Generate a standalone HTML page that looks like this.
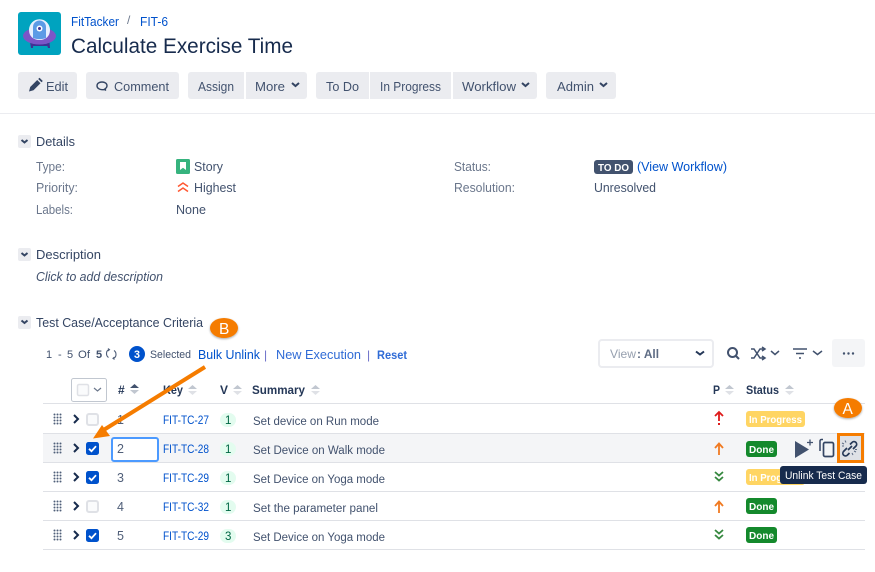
<!DOCTYPE html>
<html><head><meta charset="utf-8">
<style>
html,body{margin:0;padding:0;background:#fff;width:875px;height:572px;overflow:hidden}
svg{display:block}
text{font-family:"Liberation Sans",sans-serif;font-size:13px;fill:#42526e}
.b{fill:#ebecf0}
.l{fill:#6b778c}
.d{fill:#344563}
.a{fill:#0052cc}
.h{fill:#253858;font-weight:bold;font-size:12px}
.k{font-size:11.5px;fill:#0052cc}
.s{font-size:11.5px;fill:#42526e}
.n{fill:#505f79;font-size:12.5px}
.w{fill:#fff;font-weight:bold;font-size:10.5px}
.c{fill:none;stroke:#172b4d;stroke-width:2}
.o{fill:none;stroke:#42526e;stroke-width:1.5}
</style></head><body>
<svg width="875" height="572" viewBox="0 0 875 572" xmlns="http://www.w3.org/2000/svg">
<defs>
<filter id="sh" x="-30%" y="-30%" width="160%" height="160%"><feDropShadow dx="0" dy="1" stdDeviation="1" flood-color="#000" flood-opacity=".35"/></filter>
<g id="dots" fill="#505f79"><circle cx="0" cy="0" r="1"/><circle cx="3" cy="0" r="1"/><circle cx="6" cy="0" r="1"/><circle cx="0" cy="3" r="1"/><circle cx="3" cy="3" r="1"/><circle cx="6" cy="3" r="1"/><circle cx="0" cy="6" r="1"/><circle cx="3" cy="6" r="1"/><circle cx="6" cy="6" r="1"/><circle cx="0" cy="9" r="1"/><circle cx="3" cy="9" r="1"/><circle cx="6" cy="9" r="1"/></g>
<g id="chk"><rect x="0" y="0" width="13" height="13" rx="2.5" fill="#0052cc"/><path d="M3 6.8l2.5 2.4L10 4.2" fill="none" stroke="#fff" stroke-width="1.8"/></g>
<g id="unc"><rect x="1" y="1" width="11" height="11" rx="2" fill="#fafbfc" stroke="#dfe1e6" stroke-width="2"/></g>
<g id="sort"><path d="M4.5 0L9 4H0z" fill="#c1c7d0"/><path d="M0 6h9L4.5 10z" fill="#dfe1e6"/></g>
<g id="up"><path d="M0 5L4 .5 8 5M4 1v11" fill="none" stroke="#f07a22" stroke-width="1.8"/></g>
<g id="dn"><path d="M0 0l4 3.5L8 0M0 5l4 3.5L8 5" fill="none" stroke="#36883f" stroke-width="1.8"/></g>
</defs>

<!-- logo -->
<rect x="18" y="12" width="43" height="43" rx="3" fill="#00a3bf"/>
<path d="M30 42h3.500l-.5 6h-2zM46 42h3.500l.5 6h-2z" fill="#403294"/>
<rect x="31" y="44" width="18" height="2" fill="#403294"/>
<ellipse cx="39.500" cy="36" rx="16.500" ry="8.500" fill="#7c55c7"/>
<path d="M29 30a10.500 10.800 0 0 1 21 0c0 6-4 10-10.500 10S29 36 29 30z" fill="#e6efff"/>
<path d="M33 38V27a6.500 6.500 0 0 1 13 0v11c-4 1.500-9 1.500-13 0z" fill="#5c9be6"/>
<circle cx="39.500" cy="28.500" r="3" fill="#fff"/><circle cx="39.500" cy="28.500" r="1.500" fill="#403294"/>

<!-- header text -->
<text x="71" y="26" textLength="48" lengthAdjust="spacingAndGlyphs" class="a" style="font-size:12.5px">FitTacker</text>
<text x="127" y="24" class="l" style="font-size:12px">/</text>
<text x="140" y="26" textLength="28" lengthAdjust="spacingAndGlyphs" class="a" style="font-size:12.5px">FIT-6</text>
<text x="71" y="53" textLength="222" lengthAdjust="spacingAndGlyphs" style="font-size:21.5px;fill:#172b4d">Calculate Exercise Time</text>

<!-- toolbar -->
<rect x="18" y="72" width="59" height="27" rx="3" class="b"/>
<rect x="86" y="72" width="93" height="27" rx="3" class="b"/>
<path d="M188 75a3 3 0 0 1 3-3h53v27h-53a3 3 0 0 1-3-3z" class="b"/>
<path d="M246 72h58a3 3 0 0 1 3 3v21a3 3 0 0 1-3 3h-58z" class="b"/>
<path d="M316 75a3 3 0 0 1 3-3h50v27h-50a3 3 0 0 1-3-3z" class="b"/>
<rect x="370" y="72" width="81" height="27" class="b"/>
<path d="M453 72h81a3 3 0 0 1 3 3v21a3 3 0 0 1-3 3h-81z" class="b"/>
<rect x="546" y="72" width="70" height="27" rx="3" class="b"/>
<path d="M29 91.500l1.200-4.500 7-7 3.300 3.300-7 7zM38.200 79l1.300-1.300 3.300 3.300-1.300 1.300z" fill="#344563"/>
<text x="46" y="91" textLength="22" lengthAdjust="spacingAndGlyphs">Edit</text>
<path d="M106 90.500l-1.500-1.300c1.300-.8 2.500-1.900 2.500-3.500 0-2.400-2.400-3.700-5-3.700s-5 1.300-5 3.700 2.400 4 5 4h4" fill="none" stroke="#344563" stroke-width="1.400"/>
<text x="114" y="91" textLength="55" lengthAdjust="spacingAndGlyphs">Comment</text>
<text x="198" y="91" textLength="36" lengthAdjust="spacingAndGlyphs">Assign</text>
<text x="255" y="91" textLength="30" lengthAdjust="spacingAndGlyphs">More</text>
<path d="M292 83l3.500 3 3.500-3" class="c" style="stroke:#344563"/>
<text x="326" y="91" textLength="33" lengthAdjust="spacingAndGlyphs">To Do</text>
<text x="380" y="91" textLength="61" lengthAdjust="spacingAndGlyphs">In Progress</text>
<text x="462" y="91" textLength="54" lengthAdjust="spacingAndGlyphs">Workflow</text>
<path d="M522 83l3.500 3 3.500-3" class="c" style="stroke:#344563"/>
<text x="557" y="91" textLength="37" lengthAdjust="spacingAndGlyphs">Admin</text>
<path d="M600 83l3.500 3 3.500-3" class="c" style="stroke:#344563"/>
<rect x="0" y="113" width="875" height="1" fill="#ebecf0"/>

<!-- details -->
<rect x="18" y="135" width="13" height="13" rx="2" class="b"/>
<path d="M21.500 140l3 2.500 3-2.500" class="c" style="stroke:#344563"/>
<text x="36" y="146" textLength="39" lengthAdjust="spacingAndGlyphs" class="d" style="font-size:12.5px">Details</text>
<text x="36" y="171" textLength="29" lengthAdjust="spacingAndGlyphs" class="l" style="font-size:12.5px">Type:</text>
<rect x="176" y="159" width="14" height="15" rx="1.5" fill="#36b37e"/>
<path d="M180 162h6v8l-3-2.200-3 2.200z" fill="#fff"/>
<text x="194" y="171" textLength="29" lengthAdjust="spacingAndGlyphs" style="font-size:12.5px">Story</text>
<text x="36" y="192" textLength="42" lengthAdjust="spacingAndGlyphs" class="l" style="font-size:12.5px">Priority:</text>
<path d="M178 186.500l5-3.500 5 3.500M178 191.500l5-3.500 5 3.500" fill="none" stroke="#ff5630" stroke-width="1.500"/>
<text x="194" y="192" textLength="42" lengthAdjust="spacingAndGlyphs" style="font-size:12.5px">Highest</text>
<text x="36" y="214" textLength="37" lengthAdjust="spacingAndGlyphs" class="l" style="font-size:12.5px">Labels:</text>
<text x="176" y="214" textLength="30" lengthAdjust="spacingAndGlyphs" style="font-size:12.5px">None</text>
<text x="454" y="171" textLength="37" lengthAdjust="spacingAndGlyphs" class="l" style="font-size:12.5px">Status:</text>
<rect x="594" y="160" width="39" height="14" rx="3" fill="#42526e"/>
<text x="598" y="171" textLength="31" lengthAdjust="spacingAndGlyphs" class="w">TO DO</text>
<text x="637" y="171" textLength="90" lengthAdjust="spacingAndGlyphs" style="font-size:12.5px;fill:#0052cc">(View Workflow)</text>
<text x="454" y="192" textLength="61" lengthAdjust="spacingAndGlyphs" class="l" style="font-size:12.5px">Resolution:</text>
<text x="594" y="192" textLength="62" lengthAdjust="spacingAndGlyphs" style="font-size:12.5px">Unresolved</text>

<rect x="18" y="248" width="13" height="13" rx="2" class="b"/>
<path d="M21.500 253l3 2.500 3-2.500" class="c" style="stroke:#344563"/>
<text x="36" y="259" textLength="65" lengthAdjust="spacingAndGlyphs" class="d" style="font-size:12.5px">Description</text>
<text x="36" y="281" textLength="127" lengthAdjust="spacingAndGlyphs" style="font-size:12.5px;font-style:italic">Click to add description</text>

<rect x="18" y="316" width="13" height="13" rx="2" class="b"/>
<path d="M21.500 320.500l3 2.500 3-2.500" class="c" style="stroke:#344563"/>
<text x="36" y="327" textLength="167" lengthAdjust="spacingAndGlyphs" class="d" style="font-size:12.5px">Test Case/Acceptance Criteria</text>
<ellipse cx="224" cy="328" rx="14" ry="10" fill="#f57c00" filter="url(#sh)"/>
<text x="219" y="334" style="fill:#fff;font-size:15.5px">B</text>

<!-- table toolbar -->
<text x="46" y="358" style="font-size:11px">1</text>
<text x="58" y="358" style="font-size:11px">-</text>
<text x="67" y="358" style="font-size:11px">5</text>
<text x="78" y="358" textLength="12" lengthAdjust="spacingAndGlyphs" style="font-size:11px">Of</text>
<text x="96" y="358" style="font-size:11px;font-weight:bold">5</text>
<path d="M109 349.500c-1.800.8-2.500 2.300-2.500 4s.8 3.200 2 4M113.500 358.500c1.800-.8 2.500-2.300 2.500-4s-.8-3.200-2-4M108 348.500l1.500 1.200-1.500 1.300M114.500 359.500l-1.500-1.200 1.500-1.300" fill="none" stroke="#505f79" stroke-width="1.100"/>
<circle cx="137" cy="354" r="8" fill="#0052cc"/>
<text x="134" y="358" textLength="6" lengthAdjust="spacingAndGlyphs" style="fill:#fff;font-size:11px;font-weight:bold">3</text>
<text x="150" y="358" textLength="41" lengthAdjust="spacingAndGlyphs" style="font-size:11px">Selected</text>
<text x="198" y="359" textLength="62" lengthAdjust="spacingAndGlyphs" style="fill:#0052cc;font-size:12.5px">Bulk Unlink</text>
<text x="264" y="359" style="fill:#6b6fc9;font-size:12px">|</text>
<text x="276" y="359" textLength="85" lengthAdjust="spacingAndGlyphs" style="fill:#2f6bd6;font-size:12.5px">New Execution</text>
<text x="367" y="359" style="fill:#6b6fc9;font-size:12px">|</text>
<text x="377" y="359" textLength="30" lengthAdjust="spacingAndGlyphs" style="fill:#2f6bd6;font-size:12px;font-weight:bold">Reset</text>

<rect x="599" y="340" width="114" height="27" rx="3" fill="#fff" stroke="#ebecf0" stroke-width="2"/>
<text x="610" y="358" textLength="26" lengthAdjust="spacingAndGlyphs" style="fill:#97a0af;font-size:12px">View</text>
<text x="637" y="358" textLength="22" lengthAdjust="spacingAndGlyphs" style="fill:#5e6c84;font-size:12px;font-weight:bold">: All</text>
<path d="M696 351.500l4 3 4-3" class="c" style="stroke:#253858"/>
<circle cx="732.500" cy="352.500" r="4.500" fill="none" stroke="#42526e" stroke-width="2"/>
<path d="M736 356l3 3" stroke="#42526e" stroke-width="2"/>
<path d="M751 349h3l6 9h4M751 358h3l6-9h4M762 347l3 2-3 2M762 356l3 2-3 2" class="o"/>
<path d="M771 351l4 3.500 4-3.500" class="o"/>
<path d="M793 349h14M796 353.500h8M799 358h2" stroke="#42526e" stroke-width="1.600" fill="none"/>
<path d="M813 351l4.500 3.500 4.500-3.500" class="o"/>
<rect x="832" y="339" width="33" height="28" rx="3" fill="#f4f5f7"/>
<circle cx="844" cy="353.500" r="1.200" fill="#42526e"/><circle cx="848.500" cy="353.500" r="1.200" fill="#42526e"/><circle cx="853" cy="353.500" r="1.200" fill="#42526e"/>

<!-- table head -->
<rect x="71.500" y="378.500" width="35" height="23" rx="2" fill="#fff" stroke="#c1c7d0"/>
<rect x="77.500" y="384.500" width="11" height="11" rx="1.500" fill="#fafbfc" stroke="#dfe1e6" stroke-width="1.500"/>
<path d="M94 388l3.500 3 3.500-3" class="o" style="stroke:#6b778c;stroke-width:1.200"/>
<text x="118" y="394" class="h">#</text>
<path d="M134.500 384l4.500 4h-9z" fill="#42526e"/><path d="M130 390h9l-4.500 4z" fill="#c1c7d0"/>
<text x="163" y="394" textLength="20" lengthAdjust="spacingAndGlyphs" class="h">Key</text><use href="#sort" x="188" y="385"/>
<text x="220" y="394" textLength="8" lengthAdjust="spacingAndGlyphs" class="h">V</text><use href="#sort" x="233" y="385"/>
<text x="252" y="394" textLength="53" lengthAdjust="spacingAndGlyphs" class="h">Summary</text><use href="#sort" x="311" y="385"/>
<text x="713" y="394" textLength="7" lengthAdjust="spacingAndGlyphs" class="h">P</text><use href="#sort" x="725" y="385"/>
<text x="746" y="394" textLength="33" lengthAdjust="spacingAndGlyphs" class="h">Status</text><use href="#sort" x="785" y="385"/>

<!-- rows bg and lines -->
<rect x="43" y="433" width="822" height="29" fill="#f4f5f7"/>
<g fill="#dfe1e6">
<rect x="43" y="403" width="822" height="1"/><rect x="43" y="433" width="822" height="1"/><rect x="43" y="462" width="822" height="1"/><rect x="43" y="491" width="822" height="1"/><rect x="43" y="520" width="822" height="1"/><rect x="43" y="549" width="822" height="1"/>
</g>

<!-- row 1 -->
<use href="#dots" x="54.500" y="414.500"/>
<path d="M74 415l4 4-4 4" class="c"/>
<use href="#unc" x="86" y="413"/>
<text x="117" y="424" class="n">1</text>
<text x="163" y="424" textLength="46" lengthAdjust="spacingAndGlyphs" class="k">FIT-TC-27</text>
<rect x="220" y="413" width="16" height="14" rx="7" fill="#e3fcef"/><text x="225" y="424" class="s" style="fill:#006644">1</text>
<text x="253" y="425" textLength="126" lengthAdjust="spacingAndGlyphs" class="s">Set device on Run mode</text>
<path d="M715 416l4-4 4 4M719 412v9" fill="none" stroke="#de1b1b" stroke-width="1.800"/><rect x="718" y="423" width="2" height="2" fill="#de1b1b"/>
<rect x="746" y="411" width="59" height="16" rx="3" fill="#ffd563"/>
<text x="749" y="423" textLength="53" lengthAdjust="spacingAndGlyphs" class="w">In Progress</text>

<!-- row 2 -->
<use href="#dots" x="54.500" y="443.500"/>
<path d="M74 444l4 4-4 4" class="c"/>
<use href="#chk" x="86" y="442"/>
<rect x="112" y="438" width="46" height="23" rx="2" fill="#fff" stroke="#4c9aff" stroke-width="2"/>
<text x="117" y="453" class="n">2</text>
<text x="163" y="453" textLength="46" lengthAdjust="spacingAndGlyphs" class="k">FIT-TC-28</text>
<rect x="220" y="442" width="16" height="14" rx="7" fill="#e3fcef"/><text x="225" y="453" class="s" style="fill:#006644">1</text>
<text x="253" y="454" textLength="132" lengthAdjust="spacingAndGlyphs" class="s">Set Device on Walk mode</text>
<use href="#up" x="715" y="443"/>
<rect x="746" y="441" width="31" height="16" rx="3" fill="#14892c"/>
<text x="749" y="453" textLength="25" lengthAdjust="spacingAndGlyphs" class="w">Done</text>
<path d="M795 441l14 8.500-14 8.500z" fill="#42526e"/>
<path d="M807 442.500h6M810 439.500v6" stroke="#42526e" stroke-width="1.300"/>
<rect x="823.500" y="442.500" width="10" height="14" rx="1.500" fill="none" stroke="#344563" stroke-width="1.700"/>
<path d="M823 439.500h-1.500a1.500 1.500 0 0 0-1.500 1.500v10" fill="none" stroke="#344563" stroke-width="1.500"/>
<rect x="838.500" y="434.500" width="24" height="27" fill="#dfe1e6" stroke="#f57c00" stroke-width="3"/>
<path d="M847 448l-3.500 3.500a2.500 2.500 0 0 0 4 3.500l2-2M853 449l3-3a2.500 2.500 0 0 0-4-3.500l-2 2M848 450l4-4" fill="none" stroke="#253858" stroke-width="1.700"/>
<path d="M842 443l2 1M845 440.500l1 2M842 446h2M856 452l-2-1M853 455l-1-2M857 449.500h-2" stroke="#5e6c84" stroke-width="1" fill="none"/>

<!-- row 3 -->
<use href="#dots" x="54.500" y="472.500"/>
<path d="M74 473l4 4-4 4" class="c"/>
<use href="#chk" x="86" y="471"/>
<text x="117" y="482" class="n">3</text>
<text x="163" y="482" textLength="46" lengthAdjust="spacingAndGlyphs" class="k">FIT-TC-29</text>
<rect x="220" y="471" width="16" height="14" rx="7" fill="#e3fcef"/><text x="225" y="482" class="s" style="fill:#006644">1</text>
<text x="253" y="483" textLength="132" lengthAdjust="spacingAndGlyphs" class="s">Set Device on Yoga mode</text>
<use href="#dn" x="715" y="472"/>
<rect x="746" y="469" width="59" height="16" rx="3" fill="#ffd563"/>
<text x="749" y="481" textLength="53" lengthAdjust="spacingAndGlyphs" class="w">In Progress</text>

<!-- row 4 -->
<use href="#dots" x="54.500" y="501.500"/>
<path d="M74 502l4 4-4 4" class="c"/>
<use href="#unc" x="86" y="500"/>
<text x="117" y="511" class="n">4</text>
<text x="163" y="511" textLength="46" lengthAdjust="spacingAndGlyphs" class="k">FIT-TC-32</text>
<rect x="220" y="500" width="16" height="14" rx="7" fill="#e3fcef"/><text x="225" y="511" class="s" style="fill:#006644">1</text>
<text x="253" y="512" textLength="125" lengthAdjust="spacingAndGlyphs" class="s">Set the parameter panel</text>
<use href="#up" x="715" y="501"/>
<rect x="746" y="498" width="31" height="16" rx="3" fill="#14892c"/>
<text x="749" y="510" textLength="25" lengthAdjust="spacingAndGlyphs" class="w">Done</text>

<!-- row 5 -->
<use href="#dots" x="54.500" y="530.500"/>
<path d="M74 531l4 4-4 4" class="c"/>
<use href="#chk" x="86" y="529"/>
<text x="117" y="540" class="n">5</text>
<text x="163" y="540" textLength="46" lengthAdjust="spacingAndGlyphs" class="k">FIT-TC-29</text>
<rect x="220" y="529" width="16" height="14" rx="7" fill="#e3fcef"/><text x="225" y="540" class="s" style="fill:#006644">3</text>
<text x="253" y="541" textLength="132" lengthAdjust="spacingAndGlyphs" class="s">Set Device on Yoga mode</text>
<use href="#dn" x="715" y="530"/>
<rect x="746" y="527" width="31" height="16" rx="3" fill="#14892c"/>
<text x="749" y="539" textLength="25" lengthAdjust="spacingAndGlyphs" class="w">Done</text>

<!-- tooltip -->
<rect x="780" y="466" width="87" height="18" rx="3" fill="#172b4d"/>
<text x="785" y="479" textLength="77" lengthAdjust="spacingAndGlyphs" style="fill:#fff;font-size:11px">Unlink Test Case</text>

<!-- A badge -->
<ellipse cx="848" cy="408" rx="14" ry="10" fill="#f57c00" filter="url(#sh)"/>
<text x="842.500" y="414" style="fill:#fff;font-size:15.5px">A</text>

<!-- arrow -->
<path d="M205 367L102 431" stroke="#f57c00" stroke-width="4" fill="none"/>
<path d="M93 438.500l9-13.500 8 11z" fill="#f57c00"/>
</svg>
</body></html>
